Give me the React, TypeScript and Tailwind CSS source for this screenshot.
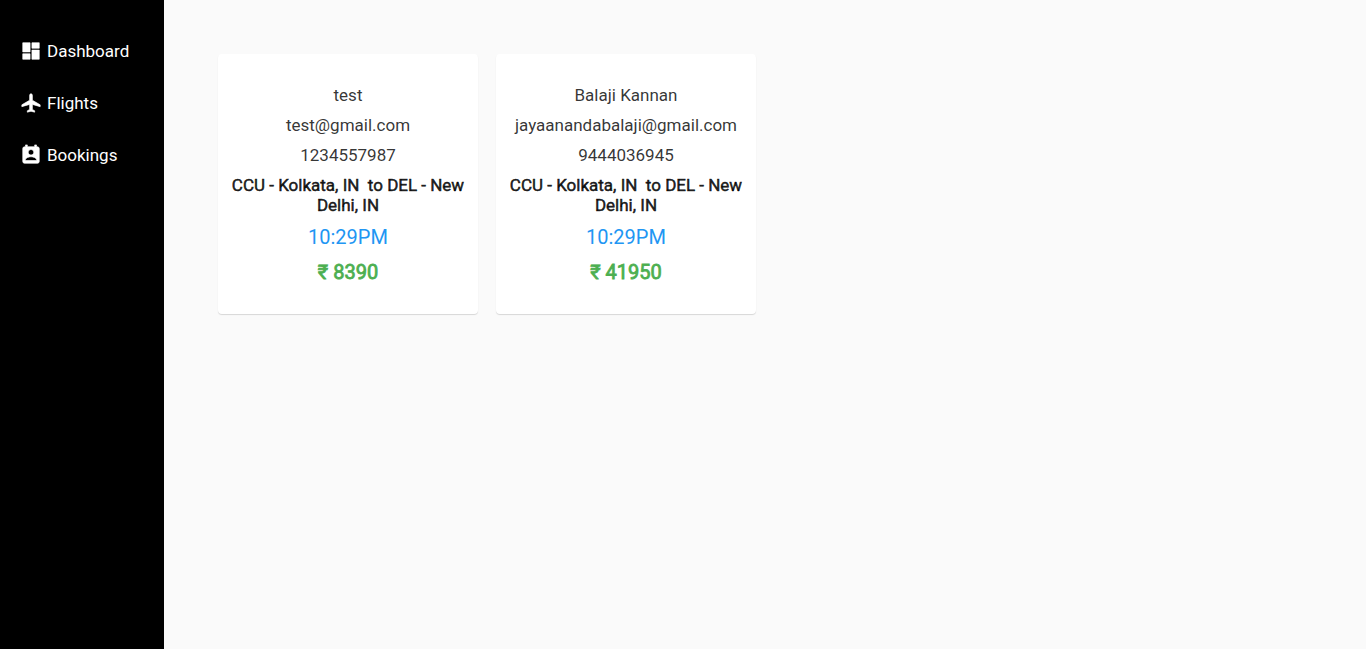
const links = [
  {
    label: "Dashboard",
    href: "#dashboard",
    path: "M3 13h8V3H3v10zm0 8h8v-6H3v6zm10 0h8V11h-8v10zm0-18v6h8V3h-8z",
  },
  {
    label: "Flights",
    href: "#flights",
    path: "M22 16v-2l-8.5-5V3.5c0-.83-.67-1.5-1.5-1.5s-1.500.67-1.500 1.500V9L2 14v2l8.500-2.500V19L8 20.500V22l4-1 4 1v-1.500L13.500 19v-5.500L22 16z",
  },
  {
    label: "Bookings",
    href: "#bookings",
    path: "M19 3h-1V1h-2v2H8V1H6v2H5c-1.110 0-2 .9-2 2v14c0 1.100.89 2 2 2h14c1.100 0 2-.9 2-2V5c0-1.100-.9-2-2-2zm-7 3c1.660 0 3 1.340 3 3s-1.340 3-3 3-3-1.340-3-3 1.340-3 3-3zm6 12H6v-1c0-2 4-3.100 6-3.100s6 1.100 6 3.100v1z",
  },
];

type Booking = {
  name: string;
  email: string;
  phone: string;
  route: string;
  time: string;
  price: number;
};

const bookings: Booking[] = [
  {
    name: "test",
    email: "test@gmail.com",
    phone: "1234557987",
    route: "CCU - Kolkata, IN\u00a0 to DEL - New Delhi, IN",
    time: "10:29PM",
    price: 8390,
  },
  {
    name: "Balaji Kannan",
    email: "jayaanandabalaji@gmail.com",
    phone: "9444036945",
    route: "CCU - Kolkata, IN\u00a0 to DEL - New Delhi, IN",
    time: "10:29PM",
    price: 41950,
  },
];

function Sidebar() {
  return (
    <nav className="w-[164px] shrink-0 bg-black pt-[25px]">
      {links.map(({ label, href, path }) => (
        <a
          key={label}
          href={href}
          className="flex h-[52px] items-center gap-[5px] pl-5 text-[17px] leading-5 text-white"
        >
          <svg
            viewBox="0 0 24 24"
            className="size-[22px] fill-current stroke-current"
            strokeWidth="0.7"
            aria-hidden="true"
          >
            <path d={path} />
          </svg>
          {label}
        </a>
      ))}
    </nav>
  );
}

function BookingCard({ name, email, phone, route, time, price }: Booking) {
  return (
    <article className="flex min-h-[260px] w-[260px] flex-col items-center gap-[10px] rounded bg-white px-[10px] pt-[31px] text-center text-[17px] leading-5 text-black/80 shadow-[0_1px_1px_rgba(0,0,0,0.14)]">
      <p>{name}</p>
      <p>{email}</p>
      <p>{phone}</p>
      <p className="text-black/87 [-webkit-text-stroke:0.03em]">{route}</p>
      <p className="text-[20px] leading-[25px] text-[#2196f3]">{time}</p>
      <p className="text-[20px] leading-[25px] text-[#4caf50] [-webkit-text-stroke:0.04em]">₹ {price}</p>
    </article>
  );
}

export default function App() {
  return (
    <div className="flex min-h-screen bg-[#fafafa] font-[Roboto,sans-serif]">
      <Sidebar />
      <main className="flex flex-1 flex-wrap content-start gap-[18px] p-[54px]">
        {bookings.map((booking) => (
          <BookingCard key={booking.email} {...booking} />
        ))}
      </main>
    </div>
  );
}
